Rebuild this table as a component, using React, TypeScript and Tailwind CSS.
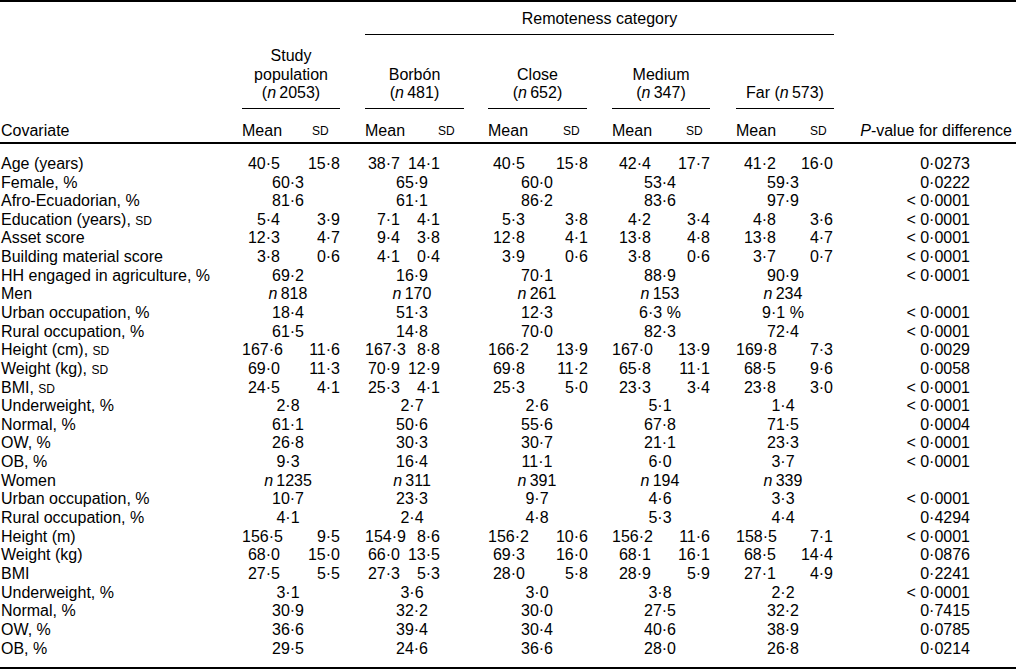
import React from "react";

type Pair = [string, string];
type NVal = { n: string };
type Val = string | Pair | NVal;

interface Row {
  label: string;
  sd?: boolean;
  vals: Val[];
  p: string;
}

// per-group column geometry (mean right edge, sd right edge, combined centre, sd header left)
const groups = [
  { cell: "w-[98px]", mean: "w-[38px]", sd: "w-[60px]", combo: "w-[92px]", meanHead: "w-[70px]" },
  { cell: "ml-[25px] w-[99px]", mean: "w-[35px]", sd: "w-[40px]", combo: "w-[94px]", meanHead: "w-[73px]" },
  { cell: "ml-[24px] w-[99px]", mean: "w-[37px]", sd: "w-[63px]", combo: "w-[98px]", meanHead: "w-[75px]" },
  { cell: "ml-[25px] w-[98px]", mean: "w-[39px]", sd: "w-[59px]", combo: "w-[96px]", meanHead: "w-[74px]" },
  { cell: "ml-[26px] w-[98px]", mean: "w-[40px]", sd: "w-[57px]", combo: "w-[94px]", meanHead: "w-[74px]" },
];

const rows: Row[] = [
  { label: "Age (years)", vals: [["40·5", "15·8"], ["38·7", "14·1"], ["40·5", "15·8"], ["42·4", "17·7"], ["41·2", "16·0"]], p: "0·0273" },
  { label: "Female, %", vals: ["60·3", "65·9", "60·0", "53·4", "59·3"], p: "0·0222" },
  { label: "Afro-Ecuadorian, %", vals: ["81·6", "61·1", "86·2", "83·6", "97·9"], p: "< 0·0001" },
  { label: "Education (years),", sd: true, vals: [["5·4", "3·9"], ["7·1", "4·1"], ["5·3", "3·8"], ["4·2", "3·4"], ["4·8", "3·6"]], p: "< 0·0001" },
  { label: "Asset score", vals: [["12·3", "4·7"], ["9·4", "3·8"], ["12·8", "4·1"], ["13·8", "4·8"], ["13·8", "4·7"]], p: "< 0·0001" },
  { label: "Building material score", vals: [["3·8", "0·6"], ["4·1", "0·4"], ["3·9", "0·6"], ["3·8", "0·6"], ["3·7", "0·7"]], p: "< 0·0001" },
  { label: "HH engaged in agriculture, %", vals: ["69·2", "16·9", "70·1", "88·9", "90·9"], p: "< 0·0001" },
  { label: "Men", vals: [{ n: "818" }, { n: "170" }, { n: "261" }, { n: "153" }, { n: "234" }], p: "" },
  { label: "Urban occupation, %", vals: ["18·4", "51·3", "12·3", "6·3 %", "9·1 %"], p: "< 0·0001" },
  { label: "Rural occupation, %", vals: ["61·5", "14·8", "70·0", "82·3", "72·4"], p: "< 0·0001" },
  { label: "Height (cm),", sd: true, vals: [["167·6", "11·6"], ["167·3", "8·8"], ["166·2", "13·9"], ["167·0", "13·9"], ["169·8", "7·3"]], p: "0·0029" },
  { label: "Weight (kg),", sd: true, vals: [["69·0", "11·3"], ["70·9", "12·9"], ["69·8", "11·2"], ["65·8", "11·1"], ["68·5", "9·6"]], p: "0·0058" },
  { label: "BMI,", sd: true, vals: [["24·5", "4·1"], ["25·3", "4·1"], ["25·3", "5·0"], ["23·3", "3·4"], ["23·8", "3·0"]], p: "< 0·0001" },
  { label: "Underweight, %", vals: ["2·8", "2·7", "2·6", "5·1", "1·4"], p: "< 0·0001" },
  { label: "Normal, %", vals: ["61·1", "50·6", "55·6", "67·8", "71·5"], p: "0·0004" },
  { label: "OW, %", vals: ["26·8", "30·3", "30·7", "21·1", "23·3"], p: "< 0·0001" },
  { label: "OB, %", vals: ["9·3", "16·4", "11·1", "6·0", "3·7"], p: "< 0·0001" },
  { label: "Women", vals: [{ n: "1235" }, { n: "311" }, { n: "391" }, { n: "194" }, { n: "339" }], p: "" },
  { label: "Urban occupation, %", vals: ["10·7", "23·3", "9·7", "4·6", "3·3"], p: "< 0·0001" },
  { label: "Rural occupation, %", vals: ["4·1", "2·4", "4·8", "5·3", "4·4"], p: "0·4294" },
  { label: "Height (m)", vals: [["156·5", "9·5"], ["154·9", "8·6"], ["156·2", "10·6"], ["156·2", "11·6"], ["158·5", "7·1"]], p: "< 0·0001" },
  { label: "Weight (kg)", vals: [["68·0", "15·0"], ["66·0", "13·5"], ["69·3", "16·0"], ["68·1", "16·1"], ["68·5", "14·4"]], p: "0·0876" },
  { label: "BMI", vals: [["27·5", "5·5"], ["27·3", "5·3"], ["28·0", "5·8"], ["28·9", "5·9"], ["27·1", "4·9"]], p: "0·2241" },
  { label: "Underweight, %", vals: ["3·1", "3·6", "3·0", "3·8", "2·2"], p: "< 0·0001" },
  { label: "Normal, %", vals: ["30·9", "32·2", "30·0", "27·5", "32·2"], p: "0·7415" },
  { label: "OW, %", vals: ["36·6", "39·4", "30·4", "40·6", "38·9"], p: "0·0785" },
  { label: "OB, %", vals: ["29·5", "24·6", "36·6", "28·0", "26·8"], p: "0·0214" },
];

const Sd = () => <span className="text-[12px]">SD</span>;

const Cell: React.FC<{ v: Val; g: (typeof groups)[number] }> = ({ v, g }) => {
  if (Array.isArray(v)) {
    return (
      <div className={`${g.cell} flex shrink-0`}>
        <span className={`${g.mean} text-right shrink-0`}>{v[0]}</span>
        <span className={`${g.sd} text-right shrink-0`}>{v[1]}</span>
      </div>
    );
  }
  return (
    <div className={`${g.cell} flex shrink-0`}>
      <span className={`${g.combo} text-center shrink-0 whitespace-nowrap`}>
        {typeof v === "string" ? (
          v
        ) : (
          <>
            <i>n</i>
            {"\u2009" + v.n}
          </>
        )}
      </span>
    </div>
  );
};

const titles: React.ReactNode[][] = [
  ["Study", "population", <>(<i>n</i>{"\u20092053)"}</>],
  ["Borbón", <>(<i>n</i>{"\u2009481)"}</>],
  ["Close", <>(<i>n</i>{"\u2009652)"}</>],
  ["Medium", <>(<i>n</i>{"\u2009347)"}</>],
  [<>Far (<i>n</i>{"\u2009573)"}</>],
];

export default function App() {
  return (
    <div className="w-[1016px] h-[671px] bg-white text-black font-['Liberation_Sans',Arial,sans-serif] text-[16px] leading-[18.65px]">
      <div className="border-t-2 border-black pt-[8px]">
        {/* spanner */}
        <div className="flex">
          <div className="w-[242px] shrink-0" />
          <div className="w-[98px] shrink-0" />
          <div className="ml-[25px] w-[469px] shrink-0 text-center border-b border-black pb-[5px]">
            Remoteness category
          </div>
        </div>

        {/* group titles */}
        <div className="flex items-end mt-[12.5px]">
          <div className="w-[242px] shrink-0" />
          {groups.map((g, i) => (
            <div key={i} className={`${g.cell} shrink-0 text-center border-b border-black pb-[5px] whitespace-nowrap`}>
              {titles[i].map((t, j) => (
                <div key={j}>{t}</div>
              ))}
            </div>
          ))}
        </div>

        {/* Mean / SD header */}
        <div className="flex mt-[12.6px] pb-[1.5px] border-b-2 border-black">
          <div className="w-[242px] shrink-0 pl-[1px]">Covariate</div>
          {groups.map((g, i) => (
            <div key={i} className={`${g.cell} flex shrink-0`}>
              <span className={`${g.meanHead} shrink-0`}>Mean</span>
              <Sd />
            </div>
          ))}
          <div className="flex-1 flex justify-end pr-[4px] whitespace-nowrap">
            <span>
              <i>P</i>-value for difference
            </span>
          </div>
        </div>

        {/* body */}
        <div className="pt-[11px] pb-[9.3px] border-b-2 border-black">
          {rows.map((r, i) => (
            <div key={i} className="flex h-[18.65px]">
              <div className="w-[242px] shrink-0 pl-[1px] whitespace-nowrap">
                {r.label}
                {r.sd && (
                  <>
                    {" "}
                    <Sd />
                  </>
                )}
              </div>
              {r.vals.map((v, j) => (
                <Cell key={j} v={v} g={groups[j]} />
              ))}
              <div className="flex-1 text-right pr-[46px] whitespace-nowrap">{r.p}</div>
            </div>
          ))}
        </div>
      </div>
    </div>
  );
}
